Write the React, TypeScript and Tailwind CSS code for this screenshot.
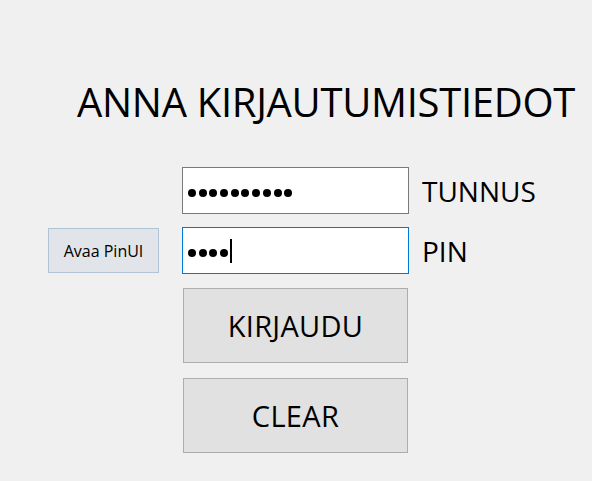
const Dots = ({ count }: { count: number }) => (
  <div className="flex items-center gap-[2.7px]">
    {Array.from({ length: count }).map((_, i) => (
      <span key={i} className="block h-[8px] w-[8px] rounded-full bg-black" />
    ))}
  </div>
);

const font = { fontFamily: '"Open Sans", "Noto Sans", sans-serif' };

export default function App() {
  return (
    <div
      className="flex h-[481px] w-[592px] flex-col bg-[#f0f0f0] text-black"
      style={font}
    >
      {/* otsikko */}
      <h1 className="ml-[77px] mt-[78px] h-[48px] whitespace-nowrap text-[40px] leading-[48px] font-normal tracking-[-0.3px]">
        ANNA KIRJAUTUMISTIEDOT
      </h1>

      {/* tunnus */}
      <div className="mt-[41px] flex items-center">
        <div className="ml-[182px] flex h-[47px] w-[227px] items-center border border-[#7a7a7a] bg-white pl-[5px] pt-[4px]">
          <Dots count={10} />
        </div>
        <span className="ml-[13px] text-[28px] leading-none">TUNNUS</span>
      </div>

      {/* pin */}
      <div className="mt-[13px] flex items-center">
        <button className="ml-[48px] flex h-[45px] w-[111px] items-center justify-center border border-[#b3c3d6] bg-[#e1e4e8] text-[16px] leading-none">
          Avaa PinUI
        </button>
        <div className="ml-[23px] flex h-[47px] w-[227px] items-center border border-[#0078d7] bg-white pl-[5px] pt-[5px]">
          <Dots count={4} />
          <span className="ml-[2px] mb-[4px] block h-[24px] w-[2px] bg-black" />
        </div>
        <span className="ml-[13px] text-[28px] leading-none">PIN</span>
      </div>

      <button className="ml-[183px] mt-[14px] flex h-[75px] w-[225px] items-center justify-center border border-[#adadad] bg-[#e1e1e1] text-[29px] leading-none tracking-[0.3px]">
        KIRJAUDU
      </button>
      <button className="ml-[183px] mt-[15px] flex h-[75px] w-[225px] items-center justify-center border border-[#adadad] bg-[#e1e1e1] text-[29px] leading-none tracking-[0.3px]">
        CLEAR
      </button>
    </div>
  );
}
